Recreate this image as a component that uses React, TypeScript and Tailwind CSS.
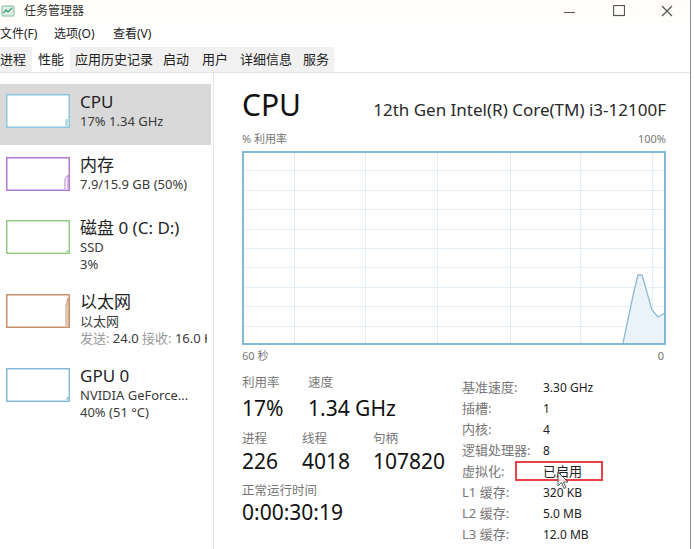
import React from 'react';

type Item = {
  name: string;
  lines: React.ReactNode[];
  color: string;
  selected?: boolean;
  spark?: string;
};

const items: Item[] = [
  { name: 'CPU', lines: ['17% 1.34 GHz'], color: '#8cc6dc', selected: true, spark: 'M60,32 L60,26 L61,25 L61,32' },
  { name: '内存', lines: ['7.9/15.9 GB (50%)'], color: '#b57ad0', spark: 'M59,32 L59,22 L62,18 L62,32' },
  { name: '磁盘 0 (C: D:)', lines: ['SSD', '3%'], color: '#94cc84', spark: 'M60,32 L62,30 L62,32' },
  {
    name: '以太网',
    lines: [
      '以太网',
      <span key="n" className="whitespace-nowrap">
        <span className="text-[#9a9a9a]">发送:</span> 24.0 <span className="text-[#9a9a9a]">接收:</span> 16.0 K
      </span>,
    ],
    color: '#c8906a',
    spark: 'M60,32 L60,12 L62,4 L62,32',
  },
  { name: 'GPU 0', lines: ['NVIDIA GeForce...', '40% (51 °C)'], color: '#86bcd8', spark: 'M60,32 L62,29 L62,32' },
];

// tab label + left margin (px), laid out to match the tab strip
const tabs: [string, string][] = [
  ['进程', 'ml-0'],
  ['性能', 'ml-[6px]'],
  ['应用历史记录', 'ml-[5px]'],
  ['启动', 'ml-[10px]'],
  ['用户', 'ml-[13px]'],
  ['详细信息', 'ml-[12px]'],
  ['服务', 'ml-[11px]'],
];

const details: [string, string][] = [
  ['基准速度:', '3.30 GHz'],
  ['插槽:', '1'],
  ['内核:', '4'],
  ['逻辑处理器:', '8'],
  ['虚拟化:', '已启用'],
  ['L1 缓存:', '320 KB'],
  ['L2 缓存:', '5.0 MB'],
  ['L3 缓存:', '12.0 MB'],
];

const SideItem: React.FC<{ item: Item }> = ({ item }) => (
  <div className={`relative flex gap-[10px] px-[6px] pt-[10px] ${item.lines.length > 1 ? 'h-[74px]' : 'h-[63px]'}`}>
    {item.selected && <div className="absolute left-0 right-[2px] top-0 h-[61px] bg-[#d9d9d9]" />}
    <svg width="64" height="34" className="relative shrink-0 bg-white">
      <rect x="0.75" y="0.75" width="62.5" height="32.5" fill="none" stroke={item.color} strokeWidth="1.5" />
      {item.spark && <path d={item.spark} fill="none" stroke={item.color} strokeWidth="1" />}
    </svg>
    <div className="relative min-w-0 overflow-x-clip -mt-[3px]">
      <div className="text-[17px] leading-[22px] text-[#1f1f1f] whitespace-nowrap">{item.name}</div>
      {item.lines.map((l, i) => (
        <div key={i} className="text-[13px] leading-[17px] text-[#3a3a3a] whitespace-nowrap">
          {l}
        </div>
      ))}
    </div>
  </div>
);

const Graph: React.FC = () => {
  const w = 424;
  const h = 194;
  const rows = Array.from({ length: 9 }, (_, i) => Math.round(((i + 1) * h) / 10) + 0.5);
  const cols = [52, 123, 195, 268, 338, 410].map((x) => x + 0.5);
  return (
    <svg width={w} height={h} className="block">
      <rect x="0" y="0" width={w} height={h} fill="#ffffff" />
      {rows.map((y) => (
        <line key={y} x1="2" x2={w - 2} y1={y} y2={y} stroke="#e3eef6" strokeWidth="1" />
      ))}
      {cols.map((x) => (
        <line key={x} x1={x} x2={x} y1="2" y2={h - 2} stroke="#e3eef6" strokeWidth="1" />
      ))}
      <path d="M381,192 L392,140 L396,124 L400,124 L410,159 L416,166 L423,162 L423,192 Z" fill="#eaf3f9" />
      <path d="M381,192 L392,140 L396,124 L400,124 L410,159 L416,166 L423,162" fill="none" stroke="#8fb9d3" strokeWidth="1.3" />
      <rect x="1" y="1" width={w - 2} height={h - 2} fill="none" stroke="#86b8d6" strokeWidth="2" />
    </svg>
  );
};

const Stat: React.FC<{ label: string; value: string; gap: string; className?: string }> = ({ label, value, gap, className }) => (
  <div className={className}>
    <div className="text-[12.5px] leading-[16px] text-[#777] whitespace-nowrap">{label}</div>
    <div className={`text-[21px] leading-[26px] text-[#111] whitespace-nowrap ${gap}`}>{value}</div>
  </div>
);

export default function App() {
  return (
    <div className="w-[694px] h-[549px] overflow-hidden bg-white font-['Noto_Sans','Noto_Sans_CJK_SC',sans-serif] text-[#1f1f1f]">
      <div className="relative w-[691px] h-[549px] border-r border-[#8f8f8f] flex flex-col">
        {/* title bar */}
        <div className="h-[22px] flex items-center shrink-0 bg-[#fffefb]">
          <svg width="14" height="14" viewBox="0 0 14 14" className="ml-[1px]">
            <rect x="1" y="2" width="12" height="10" rx="1" fill="#dff0e6" stroke="#7fb89a" />
            <path d="M2.5,9 L5,6 L7,8 L11,4" fill="none" stroke="#3f9a6a" strokeWidth="1.2" />
          </svg>
          <span className="ml-[9px] text-[12px] text-[#333]">任务管理器</span>
          <div className="ml-auto flex items-center h-full">
            <svg width="12" height="12" className="mr-[37px]">
              <line x1="0" x2="11" y1="7.5" y2="7.5" stroke="#555" strokeWidth="1" />
            </svg>
            <svg width="12" height="12" className="mr-[36px]">
              <rect x="0.5" y="0.5" width="11" height="10" fill="none" stroke="#555" strokeWidth="1.2" />
            </svg>
            <svg width="12" height="12" className="mr-[17px]">
              <path d="M1,1 L11,11 M11,1 L1,11" stroke="#555" strokeWidth="1.2" />
            </svg>
          </div>
        </div>

        {/* menu */}
        <div className="h-[23px] flex items-center shrink-0 text-[12px] text-[#222]">
          <span className="w-[54px]">文件(F)</span>
          <span className="w-[59px]">选项(O)</span>
          <span>查看(V)</span>
        </div>

        {/* tabs */}
        <div className="h-[28px] flex items-end shrink-0 border-b border-[#e4e4e4]">
          <div className="h-[25px] w-[334px] flex items-end bg-[#f1f1f1] text-[13px] text-[#222] whitespace-nowrap">
            {tabs.map(([t, ml]) =>
              t === '性能' ? (
                <div key={t} className={`h-[27px] flex items-center bg-white px-[6px] pt-[2px] ${ml}`}>
                  {t}
                </div>
              ) : (
                <div key={t} className={`h-[25px] flex items-center ${ml}`}>
                  {t}
                </div>
              ),
            )}
          </div>
        </div>

        {/* body */}
        <div className="flex flex-1 min-h-0">
          <div className="w-[214px] shrink-0 border-r border-[#e6e6e6] pt-[11px]">
            {items.map((it) => (
              <SideItem key={it.name} item={it} />
            ))}
          </div>

          <div className="flex-1 pl-[28px] pr-[24px] pt-[14px] relative">
            <div className="flex items-baseline justify-between">
              <span className="text-[30px] leading-[36px] text-[#111]">CPU</span>
              <span className="text-[17px] leading-[20px] text-[#2a2a2a]">12th Gen Intel(R) Core(TM) i3-12100F</span>
            </div>
            <div className="flex justify-between mt-[9px] text-[11px] leading-[14px] text-[#777]">
              <span>% 利用率</span>
              <span>100%</span>
            </div>
            <div className="mt-[5px]">
              <Graph />
            </div>
            <div className="flex justify-between mt-[4px] text-[11px] leading-[14px] text-[#777]">
              <span>60 秒</span>
              <span className="mr-[2px]">0</span>
            </div>

            <div className="flex mt-[12px]">
              <div className="w-[220px]">
                <div className="flex">
                  <Stat label="利用率" value="17%" gap="mt-[4px]" className="w-[66px]" />
                  <Stat label="速度" value="1.34 GHz" gap="mt-[4px]" />
                </div>
                <div className="flex mt-[10px]">
                  <Stat label="进程" value="226" gap="mt-[1px]" className="w-[60px]" />
                  <Stat label="线程" value="4018" gap="mt-[1px]" className="w-[71px]" />
                  <Stat label="句柄" value="107820" gap="mt-[1px]" />
                </div>
                <Stat label="正常运行时间" value="0:00:30:19" gap="" className="mt-[9px]" />
              </div>

              <div className="flex-1 pt-[2px]">
                {details.map(([l, v]) => (
                  <div key={l} className="flex h-[21px] items-center">
                    <span className="w-[81px] text-[13px] text-[#777] whitespace-nowrap">{l}</span>
                    {v === '已启用' ? (
                      <span className="relative text-[13px] text-[#222]">
                        <span className="absolute -left-[28px] -top-[1px] w-[88px] h-[20px] border-2 border-[#e8414a]" />
                        {v}
                      </span>
                    ) : (
                      <span className="text-[12px] text-[#222]">{v}</span>
                    )}
                  </div>
                ))}
              </div>
            </div>
          </div>
        </div>

        {/* mouse cursor */}
        <svg width="12" height="19" viewBox="0 0 12 19" className="absolute left-[557px] top-[471px] opacity-80">
          <path d="M1,1 L1,15 L4.5,11.5 L7,17.5 L9,16.5 L6.5,11 L11,11 Z" fill="#fff" stroke="#333" strokeWidth="1" />
        </svg>
      </div>
    </div>
  );
}
